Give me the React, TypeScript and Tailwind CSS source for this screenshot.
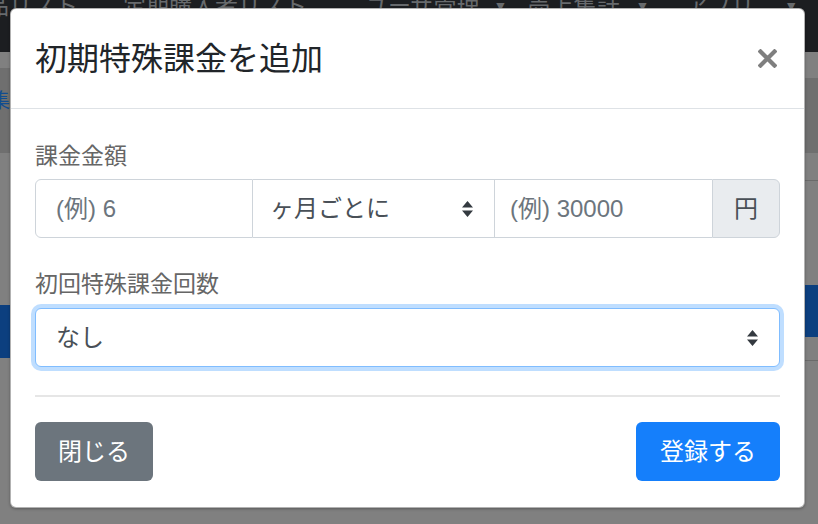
import React from 'react'

function SelectArrow() {
  return (
    <svg width="11" height="16" viewBox="0 0 11 16" className="pointer-events-none absolute top-1/2 -translate-y-1/2" style={{ right: 22 }}>
      <path d="M5.5 0 L11 6.5 H0 Z M0 9.5 H11 L5.5 16 Z" fill="#343a40" />
    </svg>
  )
}

export default function App() {
  return (
    <div className="relative h-[524px] w-[818px] overflow-hidden bg-[#808080] font-['Liberation_Sans','Noto_Sans_CJK_JP',sans-serif]">
      {/* page behind the backdrop (dimmed) */}
      <div className="h-[52px] overflow-hidden bg-[#1c1e21]">
        <div className="-mt-[5px] flex items-center whitespace-nowrap text-[23px] leading-[23px] text-[#676a6d]">
          <span className="-ml-[14px]">品リスト</span>
          <span className="ml-[45px]">定期購入者リスト</span>
          <span className="ml-[58px]">ユーザ管理</span>
          <span className="ml-[14px] text-[14px]">▼</span>
          <span className="ml-[20px]">売上集計</span>
          <span className="ml-[16px] text-[14px]">▼</span>
          <span className="ml-[36px]">アプリ</span>
          <span className="ml-[30px] text-[14px]">▼</span>
        </div>
      </div>
      <div className="flex justify-between">
        <div className="w-[10px] overflow-hidden">
          <div className="h-[16px]" />
          <div className="h-[85px] overflow-hidden bg-[#6f6f6f] pt-[22px] text-[20px] leading-[22px] text-[#0f4c91]">
            <span className="-ml-[10px] block whitespace-nowrap">集</span>
          </div>
          <div className="h-[152px]" />
          <div className="h-[53px] bg-[#0c3f7f]" />
        </div>
        <div className="w-[13px]">
          <div className="h-[26px]" />
          <div className="h-[75px] bg-[#6f6f6f]" />
          <div className="h-[27px]" />
          <div className="h-px bg-[#6a6a6a]" />
          <div className="h-[104px]" />
          <div className="h-[52px] bg-[#0c3f7f]" />
          <div className="h-[23px]" />
          <div className="h-px bg-[#6a6a6a]" />
        </div>
      </div>

      {/* modal */}
      <div className="absolute left-[10px] top-[8px] w-[795px] rounded-[6px] border border-black/30 bg-white shadow-[0_1px_3px_rgba(0,0,0,0.3)]">
        <div className="flex h-[100px] items-center justify-between border-b border-[#dee2e6] pl-[24px] pr-[27px]">
          <h5 className="text-[32px] font-normal leading-tight text-[#212529]">初期特殊課金を追加</h5>
          <button className="flex h-[20px] w-[20px] items-center justify-center" aria-label="Close">
            <svg width="19" height="19" viewBox="0 0 19 19">
              <path d="M2.5 2.5 L16.5 16.5 M16.5 2.5 L2.5 16.5" stroke="#7f7f7f" strokeWidth="4.2" strokeLinecap="square" />
            </svg>
          </button>
        </div>

        <div className="px-[24px] pb-[26px] pt-[30px]">
          <label className="mb-[6px] block text-[23px] leading-[34px] text-[#666]">課金金額</label>
          <div className="flex h-[59px] text-[24px] text-[#495057]">
            <input
              className="h-full w-[218px] rounded-l-[6px] border border-[#ced4da] pl-[20px] outline-none placeholder:text-[#6c757d]"
              placeholder="(例) 6"
            />
            <div className="relative h-full w-[242px]">
              <select className="h-full w-full appearance-none border-y border-r border-[#ced4da] bg-white pl-[17px] outline-none">
                <option>ヶ月ごとに</option>
              </select>
              <SelectArrow />
            </div>
            <input
              className="h-full w-[217px] border-y border-[#ced4da] pl-[15px] outline-none placeholder:text-[#6c757d]"
              placeholder="(例) 30000"
            />
            <div className="flex h-full w-[68px] items-center justify-center rounded-r-[6px] border border-[#ced4da] bg-[#e9ecef]">
              円
            </div>
          </div>

          <label className="mb-[7px] mt-[29px] block text-[23px] leading-[34px] text-[#666]">初回特殊課金回数</label>
          <div className="relative h-[59px]">
            <select className="h-full w-full appearance-none rounded-[6px] border border-[#80bdff] bg-white pl-[20px] text-[24px] text-[#495057] shadow-[0_0_0_4px_rgba(0,123,255,0.25)] outline-none">
              <option>なし</option>
            </select>
            <SelectArrow />
          </div>

          <hr className="mt-[28px] border-t-2 border-[#e6e6e6]" />

          <div className="mt-[25px] flex justify-between text-[24px] text-white">
            <button className="h-[59px] w-[118px] rounded-[6px] bg-[#6c757d]">閉じる</button>
            <button className="h-[59px] w-[144px] rounded-[6px] bg-[#157ffb]">登録する</button>
          </div>
        </div>
      </div>
    </div>
  )
}
